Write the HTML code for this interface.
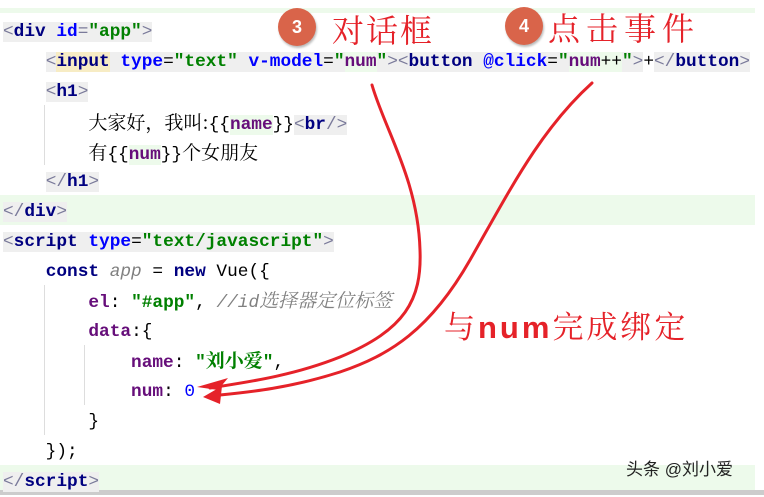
<!DOCTYPE html><html><head><meta charset="utf-8"><style>
body{margin:0;width:764px;height:495px;overflow:hidden;background:#fff;position:relative;font-family:"Liberation Mono","Noto Serif CJK SC",monospace;font-size:17.8px}
.l{position:absolute;left:3px;height:30px;line-height:30px;white-space:pre;color:#000}
.hl{position:absolute;left:0;width:755px;background:#edfaeb}
.g{background:#efefef}
.b{color:#7a7a9a}
.t{color:#000080;font-weight:bold}
.a{color:#0000ff;font-weight:bold}
.v{color:#008000;font-weight:bold}
.p{color:#660e7a;font-weight:bold}
.n{color:#0000ff}
.c{color:#808080;font-style:italic}
.k{color:#000080;font-weight:bold}
.cj{font-family:"Noto Serif CJK SC",serif;font-size:19px}
.gl{position:absolute;width:1px;background:#ddd}
.r{position:absolute;color:#e52229;font-family:"Noto Serif CJK SC",serif;white-space:nowrap}
.ci{position:absolute;width:38px;height:38px;border-radius:50%;background:#d9644a;color:#fff;font:bold 18px "Liberation Sans",sans-serif;text-align:center;line-height:38px;box-shadow:1px 2px 2px #bbb}
</style></head><body>
<div class="hl" style="top:8px;height:5px"></div>
<div class="hl" style="top:195px;height:30px"></div>
<div class="hl" style="top:465px;height:26px"></div>
<div style="position:absolute;left:0;top:490px;width:764px;height:5px;background:#ccc"></div>
<div class="gl" style="left:44px;top:105px;height:60px"></div>
<div class="gl" style="left:44px;top:285px;height:150px"></div>
<div class="gl" style="left:84px;top:345px;height:60px"></div>
<div class="l" style="top:17px"><span class="g"><span class="b">&lt;</span><span class="t">div </span><span class="a">id</span><span class="b">=</span><span class="v">"app"</span><span class="b">&gt;</span></span></div>
<div class="l" style="top:47px">    <span class="g"><span class="b">&lt;</span><span class="t" style="background:#f7ecc4">input</span> <span class="a">type</span>=<span class="v">"text"</span> <span class="a">v-model</span>=<span class="v">"</span><span class="p" style="background:#edfaeb">num</span><span class="v">"</span><span class="b">&gt;&lt;</span><span class="t">button </span><span class="a">@click</span>=<span class="v">"</span><span style="background:#edfaeb"><span class="p">num</span>++</span><span class="v">"</span><span class="b">&gt;</span></span>+<span class="g"><span class="b">&lt;/</span><span class="t">button</span><span class="b">&gt;</span></span></div>
<div class="l" style="top:77px">    <span class="g"><span class="b">&lt;</span><span class="t">h1</span><span class="b">&gt;</span></span></div>
<div class="l" style="top:107px">        <span class="cj">大家好，我叫:</span>{{<span class="p" style="background:#edfaeb">name</span>}}<span class="g"><span class="b">&lt;</span><span class="t">br</span><span class="b">/&gt;</span></span></div>
<div class="l" style="top:137px">        <span class="cj">有</span>{{<span class="p" style="background:#edfaeb">num</span>}}<span class="cj">个女朋友</span></div>
<div class="l" style="top:167px">    <span class="g"><span class="b">&lt;/</span><span class="t">h1</span><span class="b">&gt;</span></span></div>
<div class="l" style="top:197px"><span class="g"><span class="b">&lt;/</span><span class="t">div</span><span class="b">&gt;</span></span></div>
<div class="l" style="top:227px"><span class="g"><span class="b">&lt;</span><span class="t">script </span><span class="a">type</span>=<span class="v">"text/javascript"</span><span class="b">&gt;</span></span></div>
<div class="l" style="top:257px">    <span class="k">const</span> <span class="c">app</span> = <span class="k">new</span> Vue({</div>
<div class="l" style="top:287px">        <span class="p">el</span>: <span class="v">"#app"</span>, <span class="c">//id<span style="font-size:19px">选择器定位标签</span></span></div>
<div class="l" style="top:317px">        <span class="p">data</span>:{</div>
<div class="l" style="top:347px">            <span class="p">name</span>: <span class="v">"<span style="font-size:19px">刘小爱</span>"</span>,</div>
<div class="l" style="top:377px">            <span class="p">num</span>: <span class="n">0</span></div>
<div class="l" style="top:407px">        }</div>
<div class="l" style="top:437px">    });</div>
<div class="l" style="top:467px"><span class="g"><span class="b">&lt;/</span><span class="t">script</span><span class="b">&gt;</span></span></div>
<div class="ci" style="left:278px;top:8px">3</div>
<div class="r" style="left:332px;top:6px;font-size:32px;letter-spacing:2px">对话框</div>
<div class="ci" style="left:505px;top:7px">4</div>
<div class="r" style="left:548px;top:4px;font-size:32px;letter-spacing:6px">点击事件</div>
<div class="r" style="left:444px;top:302px;font-size:31px;letter-spacing:3px">与<span style="font-family:'Liberation Sans',sans-serif;font-weight:bold">num</span>完成绑定</div>
<div style="position:absolute;left:626px;top:455px;font:17px 'Liberation Sans','Noto Sans CJK SC',sans-serif;color:#222">头条 @刘小爱</div>
<svg style="position:absolute;left:0;top:0" width="764" height="495">
<g fill="none" stroke="#e52229" stroke-width="3" stroke-linecap="round">
<path d="M372 85 C385 130 418 180 420 250 C422 300 405 330 340 357 C290 377 240 383 210 388"/>
<path d="M592 83 C540 130 510 190 470 260 C430 330 390 355 340 372 C290 388 250 392 220 395"/>
</g>
<path d="M197 387 L228 378 L218 390 Z" fill="#e52229"/>
<path d="M203 397 L222 386 L220 404 Z" fill="#e52229"/>
</svg>
</body></html>
